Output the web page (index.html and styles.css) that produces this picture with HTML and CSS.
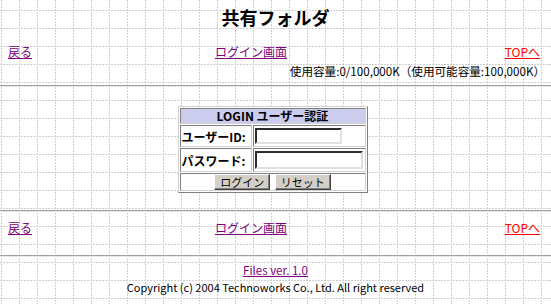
FILE: index.html
```html
<!DOCTYPE html>
<html lang="ja">
<head>
<meta charset="UTF-8">
<title>共有フォルダ</title>
<link rel="stylesheet" href="styles.css">
</head>
<body>

<h1 class="title">共有フォルダ</h1>

<div class="nav">
  <a href="#" class="visited">戻る</a>
  <a href="#" class="visited">ログイン画面</a>
  <a href="#" class="top">TOPへ</a>
</div>
<div class="usage">使用容量:0/100,000K（使用可能容量:100,000K）</div>

<hr class="rule">

<form class="login-wrap">
  <table class="login">
    <tr>
      <th colspan="2" class="head">LOGIN ユーザー認証</th>
    </tr>
    <tr>
      <td class="label">ユーザーID:</td>
      <td><input type="text" class="field short"></td>
    </tr>
    <tr>
      <td class="label">パスワード:</td>
      <td><input type="password" class="field long"></td>
    </tr>
    <tr>
      <td colspan="2" class="buttons">
        <button type="button" class="btn">ログイン</button>
        <button type="reset" class="btn">リセット</button>
      </td>
    </tr>
  </table>
</form>

<hr class="rule rule-low">

<div class="nav nav-low">
  <a href="#" class="visited">戻る</a>
  <a href="#" class="visited">ログイン画面</a>
  <a href="#" class="top">TOPへ</a>
</div>

<hr class="rule rule-foot">

<div class="footer">
  <a href="#" class="visited files">Files ver. 1.0</a>
  <div class="copy">Copyright (c) 2004 Technoworks Co., Ltd. All right reserved</div>
</div>

</body>
</html>
```

FILE: styles.css
```css
html, body {
  margin: 0;
  padding: 0;
}
body {
  font-family: "Noto Sans CJK JP", sans-serif;
  font-size: 12px;
  color: #000;
  background-color: #fff;
  background-image: url("data:image/svg+xml,%3Csvg xmlns='http://www.w3.org/2000/svg' width='18' height='18'%3E%3Cpath d='M1.5 0V18M0 10.5H18' stroke='%23cfcfcf' stroke-dasharray='2 1'/%3E%3C/svg%3E");
  background-size: 18px 18px;
  height: 304px;
  overflow: hidden;
}
a {
  text-decoration: underline;
}
a.visited { color: #800080; }
a.top { color: #ff0000; }

.title {
  margin: 6px 0 0;
  font-size: 18px;
  line-height: 22px;
  font-weight: bold;
  text-align: center;
}

.nav {
  display: grid;
  grid-template-columns: 207px auto 1fr;
  padding: 0 11px 0 8px;
  margin-top: 16px;
  line-height: 16px;
}
.nav .top { justify-self: end; }

.usage {
  margin-top: 3px;
  padding-right: 6px;
  text-align: right;
  line-height: 16px;
  font-size: 11.6px;
}

.rule {
  margin: 6px 0 0;
  border: 0;
  border-top: 1px solid #a0a0a0;
  border-bottom: 1px solid #e8e8e8;
  height: 0;
}
.rule-low { margin-top: 17px; }
.rule-foot { margin-top: 19px; }

.login-wrap {
  margin: 19px 0 0;
  display: flex;
  justify-content: center;
}
.login {
  width: 190px;
  margin-left: -6px;
  border: 1px solid;
  border-color: #d0d0d0 #808080 #808080 #d0d0d0;
  border-spacing: 1px;
  background: #fff;
}
.login td, .login th {
  border: 1px solid;
  border-color: #808080 #d0d0d0 #d0d0d0 #808080;
  padding: 0 1px;
}
.head {
  background: #ccccee;
  font-size: 12px;
  line-height: 14px;
  height: 14px;
  text-align: center;
}
.label {
  font-weight: bold;
  white-space: nowrap;
  width: 68px;
  padding: 0;
}
.field {
  box-sizing: border-box;
  display: block;
  margin: 2px 0;
  padding: 0 2px;
  border: 2px inset #d0d0d0;
  border-color: #808080 #e0e0e0 #e0e0e0 #808080;
  background: #fff;
  font: 12px "Noto Sans CJK JP", sans-serif;
}
.short { width: 87px; height: 16px; }
.long { width: 108px; height: 18px; }

.buttons {
  text-align: center;
  padding: 3px 0 1px;
  line-height: 0;
}
.btn {
  box-sizing: border-box;
  height: 16px;
  padding: 0 5px;
  margin: 0 1px;
  font: 11px/11px "Noto Sans CJK JP", sans-serif;
  color: #000;
  background: #d4d0c8;
  border: 1px solid;
  border-color: #fff #404040 #404040 #fff;
  box-shadow: inset -1px -1px 0 #808080;
}

.nav-low { margin-top: 8px; }

.footer {
  margin-top: 5px;
  text-align: center;
  line-height: 16px;
}
.files { font-size: 11.5px; }
.copy {
  margin-top: 1px;
  font-size: 11px;
}
```
